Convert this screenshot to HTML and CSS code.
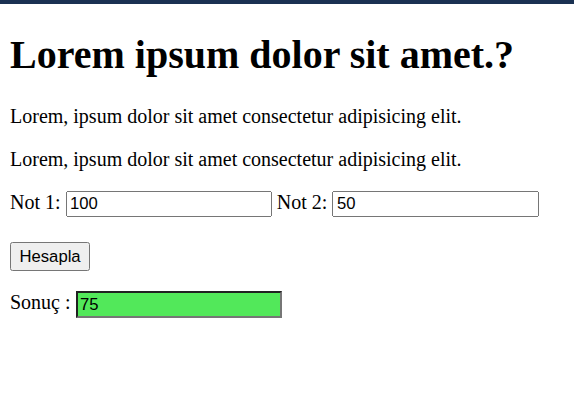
FILE: index.html
```html
<!DOCTYPE html>
<html lang="tr">
<head>
<meta charset="utf-8">
<title>Not Hesaplama</title>
<link rel="stylesheet" href="styles.css">
</head>
<body>
<h1 class="title">Lorem ipsum dolor sit amet.?</h1>
<p class="text">Lorem, ipsum dolor sit amet consectetur adipisicing elit.</p>
<p class="text">Lorem, ipsum dolor sit amet consectetur adipisicing elit.</p>
<p class="row">
  <label>Not 1: <input type="text" class="field" value="100"></label>
  <label>Not 2: <input type="text" class="field" value="50"></label>
</p>
<p class="row row-btn"><button type="button" class="btn">Hesapla</button></p>
<p class="row row-result">Sonuç : <input type="text" class="field result" value="75"></p>
</body>
</html>
```

FILE: styles.css
```css
html {
  border-top: 4px solid #1a3152;
}
body {
  zoom: 1.25;
  margin: 0 8px 8px;
  font-family: "Liberation Serif", serif;
  font-size: 16px;
  color: #000;
  background: #fff;
}
.field {
  box-sizing: border-box;
  width: 165px;
  font-family: "Liberation Sans", sans-serif;
}
.row-btn {
  margin-top: calc(1em + 4px);
}
.btn {
  padding: 2px 6px;
  font-family: "Liberation Sans", sans-serif;
}
.row-result {
  margin-top: 1em;
}
.result {
  height: 21.5px;
  background-color: #52e85a;
}
```
